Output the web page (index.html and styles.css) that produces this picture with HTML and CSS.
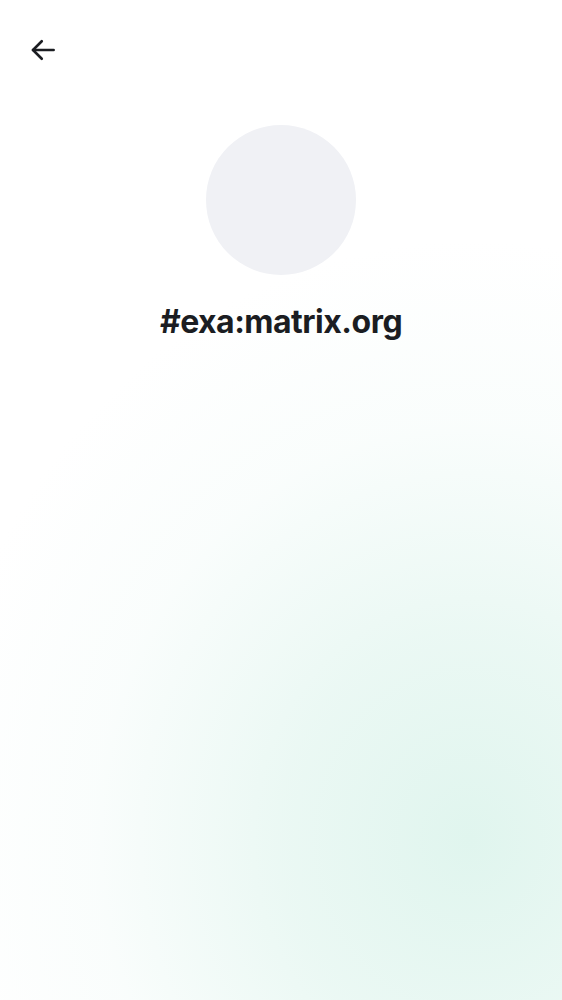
FILE: index.html
```html
<!DOCTYPE html>
<html lang="en">
<head>
<meta charset="utf-8">
<title>Room</title>
<link rel="stylesheet" href="styles.css">
</head>
<body>
<div class="screen">
  <header class="topbar">
    <button class="back" aria-label="Back">
      <svg width="30" height="30" viewBox="0 0 24 24" fill="none" stroke="#1b1d22" stroke-width="2.1" stroke-linecap="round" stroke-linejoin="round"><path d="M20.5 12H4"/><path d="M11 5l-7 7 7 7"/></svg>
    </button>
  </header>
  <main class="profile">
    <div class="avatar"></div>
    <h1 class="name">#exa:matrix.org</h1>
  </main>
</div>
</body>
</html>
```
FILE: styles.css
```css
html, body {
  margin: 0;
  padding: 0;
}
body {
  font-family: Inter, "Noto Sans", sans-serif;
  color: #1b1d22;
  background: #ffffff;
}
.screen {
  width: 562px;
  height: 1000px;
  overflow: hidden;
  background:
    radial-gradient(ellipse 540px 600px at 470px 840px, rgba(224,245,238,1) 0%, rgba(228,246,240,0.75) 35%, rgba(240,250,247,0.35) 70%, rgba(255,255,255,0) 100%),
    #ffffff;
}
.topbar {
  height: 100px;
  display: flex;
  align-items: flex-start;
  padding: 35px 0 0 28px;
  box-sizing: border-box;
}
.back {
  border: 0;
  background: none;
  padding: 0;
  width: 30px;
  height: 30px;
  display: flex;
  cursor: pointer;
}
.profile {
  display: flex;
  flex-direction: column;
  align-items: center;
  padding-top: 25px;
}
.avatar {
  width: 150px;
  height: 150px;
  border-radius: 50%;
  background: #f0f1f5;
}
.name {
  margin: 27px 0 0;
  font-size: 32px;
  font-weight: 700;
  line-height: 40px;
  letter-spacing: -0.5px;
  color: #1b1d22;
}
```
